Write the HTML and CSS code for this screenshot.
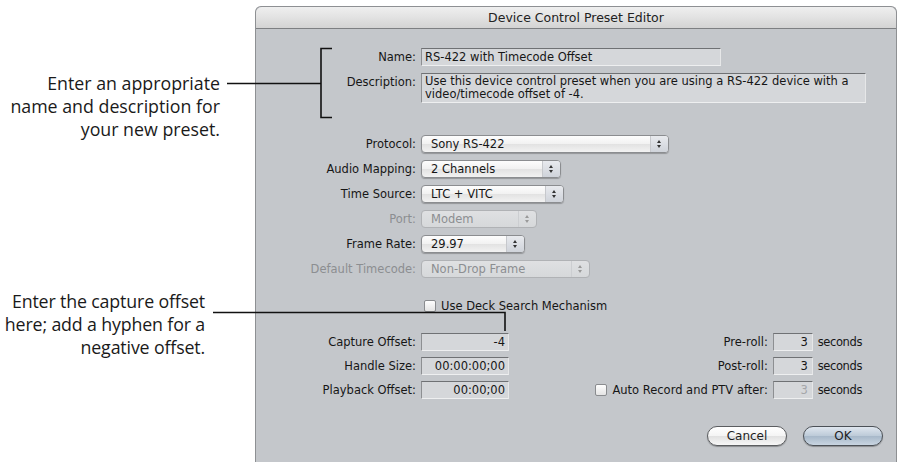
FILE: index.html
```html
<!DOCTYPE html>
<html lang="en">
<head>
    <meta charset="UTF-8">
    <title>Device Control Preset Editor</title>
    <link rel="stylesheet" href="styles.css">
</head>
<body>

<div class="page">
    <div class="notes">
        <p class="note note-name">Enter an appropriate<br>name and description for<br>your new preset.</p>
        <p class="note note-offset">Enter the capture offset<br>here; add a hyphen for a<br>negative offset.</p>
    </div>

    <div class="dialog">
        <div class="titlebar">Device Control Preset Editor</div>
        <div class="content">
            <div class="row row-name">
                <label>Name:</label>
                <div class="field w-name">RS-422 with Timecode Offset</div>
            </div>
            <div class="row row-desc">
                <label>Description:</label>
                <div class="field area w-desc">Use this device control preset when you are using a RS-422 device with a video/timecode offset of -4.</div>
            </div>

            <div class="row row-protocol">
                <label>Protocol:</label>
                <div class="popup" style="width: 248px">Sony RS-422<span class="arrows"></span></div>
            </div>
            <div class="row row-pop">
                <label>Audio Mapping:</label>
                <div class="popup" style="width: 140px">2 Channels<span class="arrows"></span></div>
            </div>
            <div class="row row-pop">
                <label>Time Source:</label>
                <div class="popup" style="width: 143px">LTC + VITC<span class="arrows"></span></div>
            </div>
            <div class="row row-pop disabled">
                <label>Port:</label>
                <div class="popup" style="width: 116px">Modem<span class="arrows"></span></div>
            </div>
            <div class="row row-pop">
                <label>Frame Rate:</label>
                <div class="popup" style="width: 104px">29.97<span class="arrows"></span></div>
            </div>
            <div class="row row-pop disabled">
                <label>Default Timecode:</label>
                <div class="popup" style="width: 169px">Non-Drop Frame<span class="arrows"></span></div>
            </div>

            <div class="row row-check">
                <span></span>
                <div class="check"><span class="box"></span>Use Deck Search Mechanism</div>
            </div>

            <div class="split">
                <div class="left-col">
                    <div class="row row-num">
                        <label>Capture Offset:</label>
                        <div class="field num">-4</div>
                    </div>
                    <div class="row row-num">
                        <label>Handle Size:</label>
                        <div class="field num">00:00:00;00</div>
                    </div>
                    <div class="row row-num">
                        <label>Playback Offset:</label>
                        <div class="field num">00:00;00</div>
                    </div>
                </div>
                <div class="right-col">
                    <div class="rrow">
                        <label>Pre-roll:</label>
                        <div class="field sec">3</div>
                        <span class="unit">seconds</span>
                    </div>
                    <div class="rrow">
                        <label>Post-roll:</label>
                        <div class="field sec">3</div>
                        <span class="unit">seconds</span>
                    </div>
                    <div class="rrow">
                        <div class="check"><span class="box"></span>Auto Record and PTV after:</div>
                        <div class="field sec dim">3</div>
                        <span class="unit">seconds</span>
                    </div>
                </div>
            </div>

            <div class="buttons">
                <button class="btn">Cancel</button>
                <button class="btn btn-ok">OK</button>
            </div>
        </div>
    </div>

    <!-- leader lines from the notes to the controls -->
    <svg class="leaders" width="898" height="462" viewBox="0 0 898 462">
        <g fill="none" stroke="#111" stroke-width="1.6">
            <path d="M227 83.5 H321"/>
            <path d="M332 48.5 H321 V117.5 H332"/>
            <path d="M213 312.5 H505 V331"/>
        </g>
    </svg>
</div>

</body>
</html>
```

FILE: styles.css
```css
body {
    margin: 0;
    background: #fff;
    font-family: "DejaVu Sans", Verdana, sans-serif;
    font-size: 11.5px;
    color: #161616;
}
.page {
    position: relative;
    display: flex;
    width: 898px;
    height: 462px;
    padding-top: 6px;
    box-sizing: border-box;
    overflow: hidden;
}
.notes {
    width: 255px;
    flex: none;
    font-family: "Open Sans", "Noto Sans", sans-serif;
    font-size: 17.8px;
    color: #1a1a1a;
    text-align: right;
}
.note {
    margin: 0;
    line-height: 23px;
    white-space: nowrap;
}
.note-name { margin-top: 66px; padding-right: 35px; }
.note-offset {
    margin-top: 149px;
    padding-right: 50px;
    letter-spacing: -0.15px;
}

.dialog {
    flex: 1;
    margin-right: 1px;
    background: #c4c7cb;
    border: 1px solid #8e9093;
    border-bottom: none;
    border-radius: 6px 6px 0 0;
}
.titlebar {
    height: 21px;
    line-height: 21px;
    text-align: center;
    font-size: 12.5px;
    color: #222;
    background: linear-gradient(#efefef, #e2e2e2 50%, #d3d3d3);
    border-bottom: 1px solid #7d7f82;
    border-radius: 6px 6px 0 0;
}
.content {
    padding: 19px 0 0;
}

.row {
    display: grid;
    grid-template-columns: 165px 1fr;
    align-items: center;
}
.row label {
    text-align: right;
    padding-right: 5px;
}
.row-desc { margin-top: 7px; align-items: start; }
.row-desc label { padding-top: 2px; }
.row-protocol { margin-top: 32px; }
.row-pop { margin-top: 7px; }
.row-check { margin-top: 21px; }
.row-num { margin-top: 6px; }
.row-num:first-child { margin-top: 0; }

.disabled label,
.disabled .popup { color: #8c8e91; }

.field {
    box-sizing: border-box;
    height: 18px;
    line-height: 16px;
    padding: 0 3px;
    background: #d5d7da;
    border: 1px solid;
    border-color: #6f7174 #e6e7e8 #eeeff0 #8d8f92;
    white-space: nowrap;
}
.w-name { width: 300px; }
.w-desc {
    width: 445px;
    height: 30px;
    white-space: normal;
    line-height: 13px;
    padding-top: 1px;
}
.num {
    width: 88px;
    text-align: right;
}

.popup {
    position: relative;
    box-sizing: border-box;
    height: 18px;
    line-height: 16px;
    padding-left: 9px;
    background: linear-gradient(#fdfdfd, #f1f1f1 50%, #e2e2e2 51%, #f2f2f2);
    border: 1px solid #8b8d90;
    border-radius: 4px;
    box-shadow: 0 1px 1px rgba(0, 0, 0, 0.25);
}
.disabled .popup {
    background: linear-gradient(#dfe0e2, #d6d8da);
    border-color: #b0b2b5;
    box-shadow: none;
}
.arrows {
    position: absolute;
    top: 0;
    right: 0;
    width: 17px;
    height: 16px;
    border-left: 1px solid #c6c8cc;
    border-radius: 0 3px 3px 0;
    background: linear-gradient(#e8eaee, #cfd3da);
}
.arrows::before,
.arrows::after {
    content: "";
    position: absolute;
    left: 6px;
    border-left: 2.5px solid transparent;
    border-right: 2.5px solid transparent;
}
.arrows::before { top: 4px; border-bottom: 3px solid #333; }
.arrows::after { top: 9px; border-top: 3px solid #333; }
.disabled .arrows { background: transparent; border-left-color: #ccced1; }
.disabled .arrows::before { border-bottom-color: #999; }
.disabled .arrows::after { border-top-color: #999; }

.check {
    display: flex;
    align-items: center;
    height: 14px;
    padding-left: 3px;
    white-space: nowrap;
}
.box {
    width: 10px;
    height: 10px;
    margin-right: 5px;
    border: 1px solid #8a8c8f;
    border-radius: 2px;
    background: linear-gradient(#fefefe, #e4e4e4);
}

.split {
    display: flex;
    justify-content: space-between;
    margin-top: 20px;
}
.right-col {
    padding-right: 34px;
}
.rrow {
    display: flex;
    align-items: center;
    justify-content: flex-end;
    margin-top: 6px;
}
.rrow:first-child { margin-top: 0; }
.rrow label,
.rrow .check { margin-right: 5px; }
.sec {
    width: 40px;
    text-align: right;
    padding-right: 4px;
}
.sec.dim { color: #a4a6a9; }
.unit {
    margin-left: 5px;
    letter-spacing: -0.4px;
}

.buttons {
    display: flex;
    justify-content: flex-end;
    gap: 16px;
    margin-top: 27px;
    padding-right: 13px;
}
.btn {
    height: 20px;
    width: 80px;
    padding: 0;
    font-family: "DejaVu Sans", Verdana, sans-serif;
    font-size: 12px;
    color: #1e1e1e;
    border: 1px solid #5b5d60;
    border-radius: 10px;
    background: linear-gradient(#ffffff, #f4f4f4 50%, #e1e1e1 51%, #f7f7f7);
    box-shadow: 0 1px 1px rgba(0, 0, 0, 0.3);
}
.btn-ok {
    width: 80px;
    background: linear-gradient(#dfe6ee, #bccad8 50%, #a7b8c9 51%, #c9d5e1);
    border-color: #4c5157;
}

.leaders {
    position: absolute;
    left: 0;
    top: 0;
    pointer-events: none;
}
```
